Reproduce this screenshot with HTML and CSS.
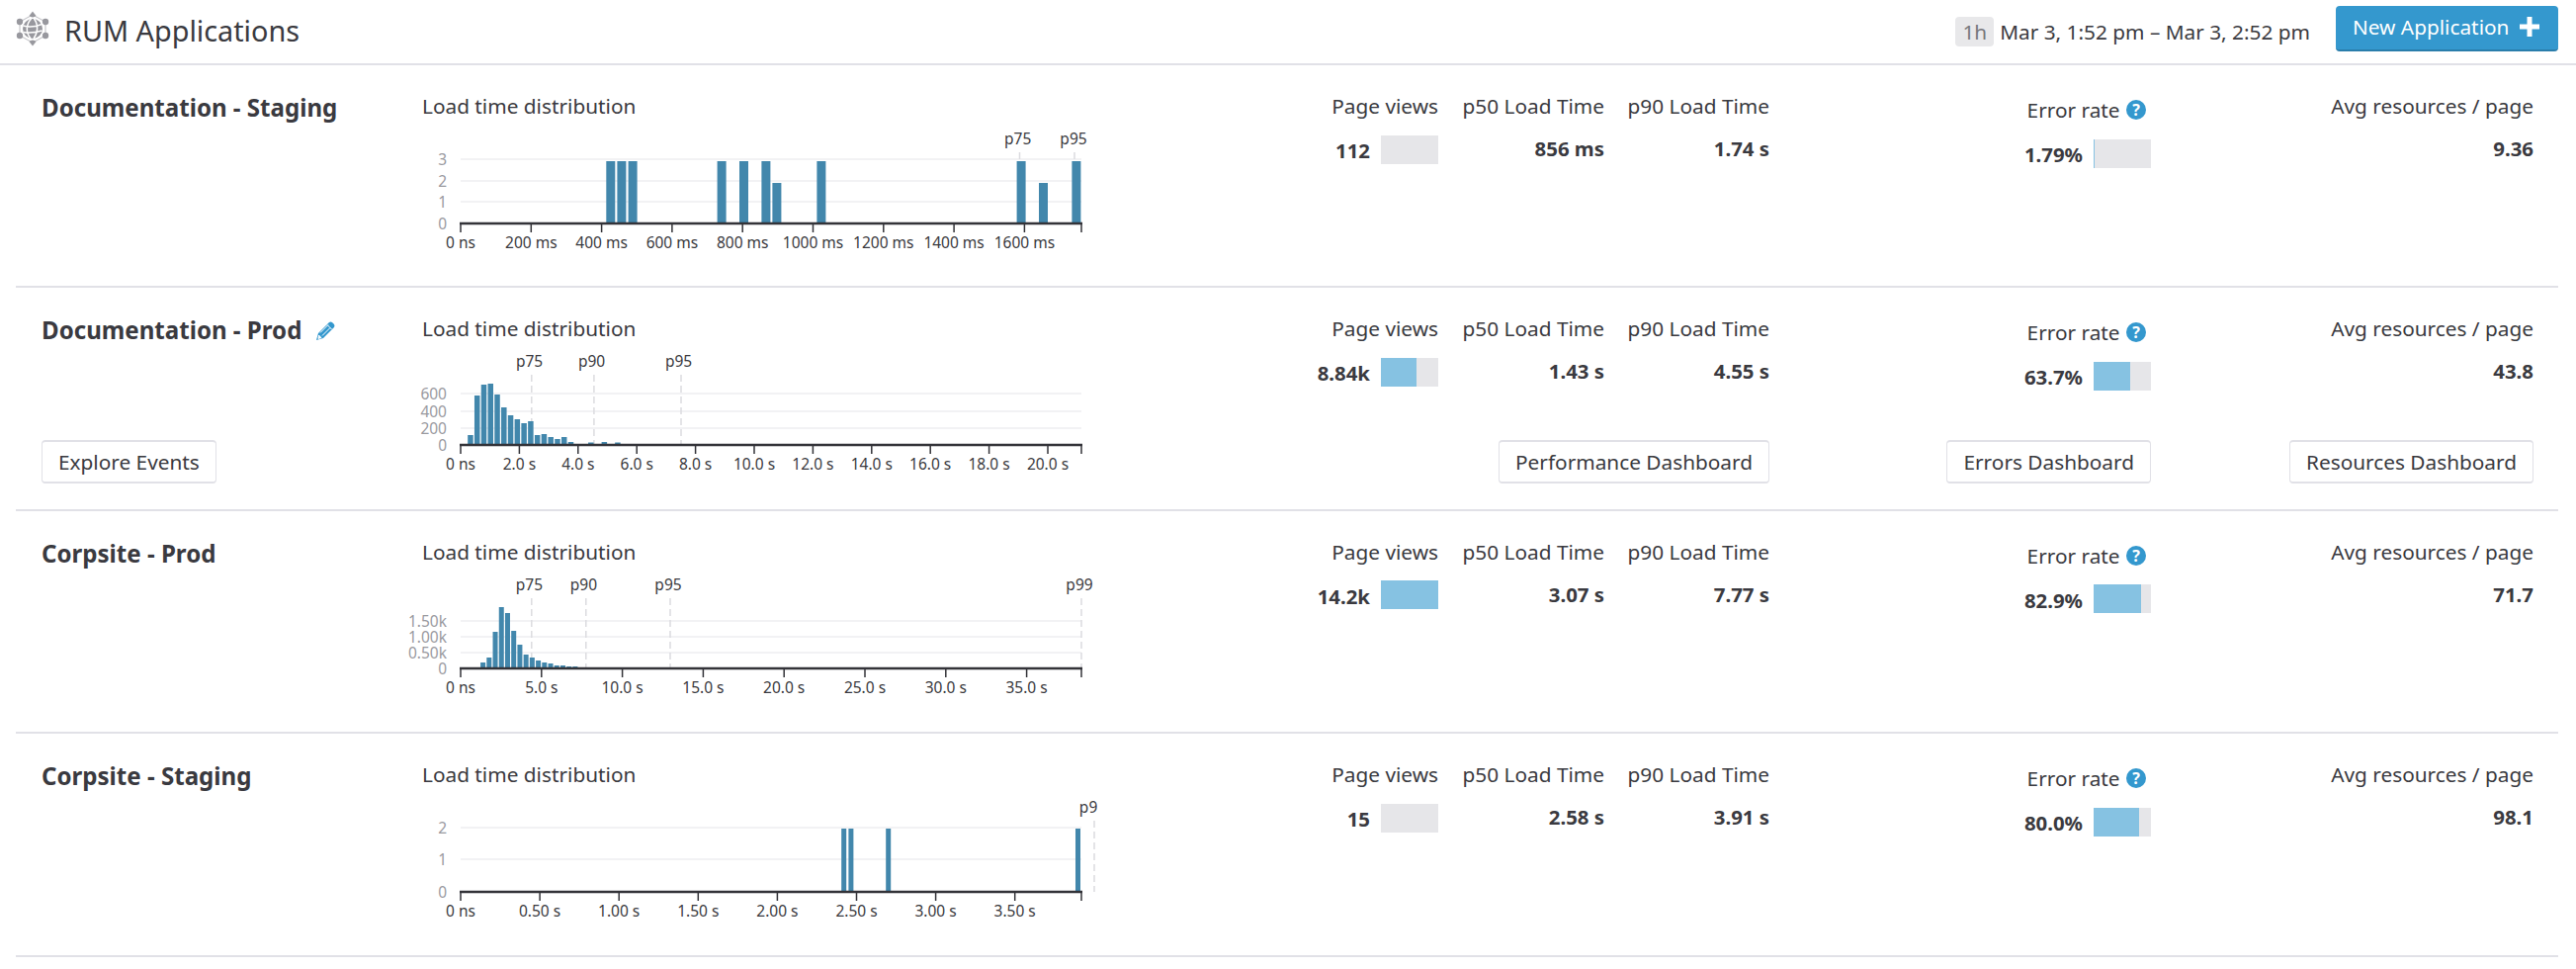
FILE: index.html
```html
<!DOCTYPE html>
<html lang="en">

<head>
    <meta charset="UTF-8">
    <title>RUM Applications</title>
    <link rel="stylesheet" href="styles.css">
</head>

<body>

    <header class="page-header">
        <svg class="globe" viewBox="0 0 34 36" width="34" height="36">
            <path class="globe-ring" d="M17 4 L30 11 L30 25 L17 32 L4 25 L4 11 Z" />
            <path class="globe-node" d="M17 .5 L20.500 5 L17 7 L13.500 5 Z" />
            <path class="globe-node" d="M17 35.500 L20.500 31 L17 29 L13.500 31 Z" />
            <circle class="globe-node" cx="4" cy="11" r="3.2" />
            <circle class="globe-node" cx="30" cy="11" r="3.2" />
            <circle class="globe-node" cx="4" cy="25" r="3.2" />
            <circle class="globe-node" cx="30" cy="25" r="3.2" />
            <circle class="globe-halo" cx="17" cy="18" r="11.5" />
            <circle class="globe-body" cx="17" cy="18" r="10" />
            <path class="globe-lines" d="M15.500 8 C10 14 10 22 15 28 M18.500 8 C23 14 22.500 22 18 28 M7.500 15 C13 17 20 16 26.500 13.500 M7.500 21.500 C13 22.500 20 22 26.500 20" />
        </svg>
        <h1 class="page-title">RUM Applications</h1>
        <div class="time-range">
            <span class="time-chip">1h</span>
            <span class="time-text">Mar 3, 1:52 pm – Mar 3, 2:52 pm</span>
        </div>
        <button class="btn-primary">New Application
            <svg class="plus" viewBox="0 0 20 20" width="20" height="20"><path d="M7.5 0h5v7.5H20v5h-7.5V20h-5v-7.5H0v-5h7.5z" /></svg>
        </button>
    </header>

    <section class="app-row">
        <div class="col-name"><h2 class="app-name">Documentation - Staging</h2></div>
        <div class="col-chart">
            <div class="col-label">Load time distribution</div>
            <svg class="chart" id="chart-docs-staging" viewBox="400 60 710 140" width="710" height="140"></svg>
        </div>
        <div class="col-metric col-views">
            <div class="col-label">Page views</div>
            <div class="metric-value"><span class="value-num">112</span><span class="meter"></span></div>
        </div>
        <div class="col-metric col-time">
            <div class="col-label">p50 Load Time</div>
            <div class="metric-value">856 ms</div>
        </div>
        <div class="col-metric col-time">
            <div class="col-label">p90 Load Time</div>
            <div class="metric-value">1.74 s</div>
        </div>
        <div class="col-metric col-error">
            <div class="col-label">Error rate <span class="help">?</span></div>
            <div class="metric-value"><span class="value-num">1.79%</span><span class="meter"><span class="meter-fill" style="width: 1.79%"></span></span></div>
        </div>
        <div class="col-metric col-avg">
            <div class="col-label">Avg resources / page</div>
            <div class="metric-value">9.36</div>
        </div>
    </section>

    <section class="app-row">
        <div class="col-name">
            <h2 class="app-name">Documentation - Prod
                <svg class="pencil" viewBox="0 0 20 21" width="20" height="21">
                    <path class="pencil-body" d="M1 20 L3 13 L14 2 Q15.500 .8 17 2 L19 4 Q20 5.500 19 7 L8 18 Z" />
                    <path class="pencil-cut" d="M12 4.500 L16.500 9 M3.500 15 L6 17.500 L3 18.500 Z M5 12.500 L13 4.500 M7 15.500 L15 7.500" />
                </svg>
            </h2>
            <button class="btn">Explore Events</button>
        </div>
        <div class="col-chart">
            <div class="col-label">Load time distribution</div>
            <svg class="chart" id="chart-docs-prod" viewBox="400 60 710 140" width="710" height="140"></svg>
        </div>
        <div class="col-metric col-views">
            <div class="col-label">Page views</div>
            <div class="metric-value"><span class="value-num">8.84k</span><span class="meter"><span class="meter-fill" style="width: 62%"></span></span></div>
        </div>
        <div class="col-metric col-time">
            <div class="col-label">p50 Load Time</div>
            <div class="metric-value">1.43 s</div>
        </div>
        <div class="col-metric col-time">
            <div class="col-label">p90 Load Time</div>
            <div class="metric-value">4.55 s</div>
            <button class="btn">Performance Dashboard</button>
        </div>
        <div class="col-metric col-error">
            <div class="col-label">Error rate <span class="help">?</span></div>
            <div class="metric-value"><span class="value-num">63.7%</span><span class="meter"><span class="meter-fill" style="width: 63.7%"></span></span></div>
            <button class="btn">Errors Dashboard</button>
        </div>
        <div class="col-metric col-avg">
            <div class="col-label">Avg resources / page</div>
            <div class="metric-value">43.8</div>
            <button class="btn">Resources Dashboard</button>
        </div>
    </section>

    <section class="app-row">
        <div class="col-name"><h2 class="app-name">Corpsite - Prod</h2></div>
        <div class="col-chart">
            <div class="col-label">Load time distribution</div>
            <svg class="chart" id="chart-corp-prod" viewBox="400 60 710 140" width="710" height="140"></svg>
        </div>
        <div class="col-metric col-views">
            <div class="col-label">Page views</div>
            <div class="metric-value"><span class="value-num">14.2k</span><span class="meter"><span class="meter-fill" style="width: 100%"></span></span></div>
        </div>
        <div class="col-metric col-time">
            <div class="col-label">p50 Load Time</div>
            <div class="metric-value">3.07 s</div>
        </div>
        <div class="col-metric col-time">
            <div class="col-label">p90 Load Time</div>
            <div class="metric-value">7.77 s</div>
        </div>
        <div class="col-metric col-error">
            <div class="col-label">Error rate <span class="help">?</span></div>
            <div class="metric-value"><span class="value-num">82.9%</span><span class="meter"><span class="meter-fill" style="width: 82.9%"></span></span></div>
        </div>
        <div class="col-metric col-avg">
            <div class="col-label">Avg resources / page</div>
            <div class="metric-value">71.7</div>
        </div>
    </section>

    <section class="app-row">
        <div class="col-name"><h2 class="app-name">Corpsite - Staging</h2></div>
        <div class="col-chart">
            <div class="col-label">Load time distribution</div>
            <svg class="chart" id="chart-corp-staging" viewBox="400 60 710 140" width="710" height="140"></svg>
        </div>
        <div class="col-metric col-views">
            <div class="col-label">Page views</div>
            <div class="metric-value"><span class="value-num">15</span><span class="meter"></span></div>
        </div>
        <div class="col-metric col-time">
            <div class="col-label">p50 Load Time</div>
            <div class="metric-value">2.58 s</div>
        </div>
        <div class="col-metric col-time">
            <div class="col-label">p90 Load Time</div>
            <div class="metric-value">3.91 s</div>
        </div>
        <div class="col-metric col-error">
            <div class="col-label">Error rate <span class="help">?</span></div>
            <div class="metric-value"><span class="value-num">80.0%</span><span class="meter"><span class="meter-fill" style="width: 80%"></span></span></div>
        </div>
        <div class="col-metric col-avg">
            <div class="col-label">Avg resources / page</div>
            <div class="metric-value">98.1</div>
        </div>
    </section>

    <script src="charts.js"></script>

</body>

</html>
```

FILE: styles.css
```css
body {
    margin: 0;
    font-family: "Noto Sans", sans-serif;
    font-size: 20.8px;
    color: #3a3a40;
    background: #fff;
}

.page-header {
    display: flex;
    align-items: center;
    height: 64px;
    padding: 0 18px 0 16px;
    border-bottom: 2px solid #e1e1e7;
}

.globe {
    margin-right: 15px;
    margin-top: -6px;
    flex: none;
}

.globe-ring {
    fill: none;
    stroke: #c8c8cc;
    stroke-width: 1.2;
}

.globe-halo {
    fill: #fff;
}

.globe-node,
.globe-body {
    fill: #98989e;
}

.globe-lines {
    fill: none;
    stroke: #fff;
    stroke-width: 1.5;
}

.page-title {
    margin: -3px 0 0;
    font-size: 28.8px;
    font-weight: 400;
}

.time-range {
    display: flex;
    align-items: center;
    margin-left: auto;
    margin-right: 26px;
}

.time-chip {
    padding: 0 7px;
    height: 30px;
    line-height: 30px;
    margin-right: 6px;
    background: #e8e8ea;
    border-radius: 4px;
    color: #77777c;
}

.btn-primary {
    display: flex;
    align-items: center;
    gap: 11px;
    flex: none;
    height: 46px;
    width: 225px;
    padding: 0 0 2px 17px;
    margin-top: -6px;
    font: inherit;
    color: #fff;
    background: #3498ce;
    border: 0;
    border-bottom: 2px solid #2a7dab;
    border-radius: 4px;
}

.plus {
    fill: #fff;
}

.app-row {
    display: grid;
    grid-template-columns: 386px 682px 345px 168px 167px 386px 387px;
    grid-template-rows: minmax(0, 1fr);
    box-sizing: border-box;
    height: 225.4px;
    margin: 0 18px 0 16px;
    padding: 0 25px 25.4px 26px;
    border-bottom: 2px solid #e1e1e7;
}

.col-name,
.col-chart,
.col-metric {
    display: flex;
    flex-direction: column;
    padding-top: 27px;
}

.col-name {
    align-items: flex-start;
    padding-top: 26px;
}

.col-chart .col-label {
    margin-left: -1px;
}

.col-metric {
    align-items: flex-end;
    white-space: nowrap;
}

.col-error {
    padding-top: 31px;
}

.col-label {
    line-height: 28px;
}

.col-error .col-label {
    padding-right: 5px;
}

.app-name {
    display: flex;
    align-items: center;
    gap: 14px;
    margin: 0;
    font-size: 24.1px;
    line-height: 34px;
    font-weight: 700;
}

.chart {
    display: block;
    flex: none;
    margin-top: 5px;
    margin-left: -28px;
}

.metric-value {
    display: flex;
    align-items: center;
    gap: 11px;
    height: 30px;
    margin-top: 15px;
    font-size: 20.4px;
    font-weight: 700;
}

.col-time .metric-value,
.col-avg .metric-value {
    margin-top: 14px;
    margin-bottom: 1px;
}

.value-num {
    position: relative;
    top: 1px;
}

.meter {
    display: block;
    width: 58px;
    height: 29px;
    background: #e6e6e9;
}

.meter-fill {
    display: block;
    height: 100%;
    background: #86c2e2;
}

.help {
    display: inline-block;
    width: 20px;
    height: 20px;
    margin-left: 1px;
    line-height: 20px;
    font-size: 16px;
    font-weight: 700;
    text-align: center;
    color: #fff;
    background: #3498ce;
    border-radius: 50%;
    vertical-align: 2px;
}

.pencil-body {
    fill: #3498ce;
}

.pencil-cut {
    fill: #fff;
    stroke: #fff;
    stroke-width: 1;
}

.btn {
    height: 44px;
    margin-top: auto;
    padding: 0 16px;
    font: inherit;
    color: #3a3a40;
    white-space: nowrap;
    background: #fff;
    border: 1px solid #e1e1e7;
    border-top-width: 2px;
    border-bottom-width: 2px;
    border-radius: 4px;
}

.grid-line {
    stroke: #eeeef0;
    stroke-width: 1.5;
}

.marker-line {
    stroke: #dcdce0;
    stroke-width: 1.5;
    stroke-dasharray: 7 4;
}

.bar {
    fill: #4287ac;
}

.axis-line {
    stroke: #333338;
    stroke-width: 2.5;
}

.tick {
    stroke: #333338;
    stroke-width: 1.5;
}

.tick-label,
.marker-label {
    font-size: 15.5px;
    fill: #3a3a40;
    text-anchor: middle;
}

.y-label {
    font-size: 15.5px;
    fill: #9a9a9f;
    text-anchor: end;
}
```

FILE: charts.js
```js
// x values are page pixels, y values are pixels from the top of the row
const AXIS_LEFT = 466;
const AXIS_RIGHT = 1094;

const charts = {
    'chart-docs-staging': {
        base: 160,
        grid: [[95, '3'], [117, '2'], [138, '1'], [160, '0']],
        tickStep: 71.3,
        ticks: ['0 ns', '200 ms', '400 ms', '600 ms', '800 ms', '1000 ms', '1200 ms', '1400 ms', '1600 ms'],
        markers: [[1031.5, 'p75', 1029.7], [1087, 'p95', 1086]],
        barWidth: 9,
        bars: [[613.3, 63], [624.4, 63], [635.6, 63], [725.6, 63], [748, 63], [770.4, 63], [781.4, 41],
            [826.4, 63], [1028.6, 63], [1051, 41], [1084.4, 63]]
    },
    'chart-docs-prod': {
        base: 159,
        grid: [[107, '600'], [125, '400'], [142, '200'], [159, '0']],
        tickStep: 59.4,
        ticks: ['0 ns', '2.0 s', '4.0 s', '6.0 s', '8.0 s', '10.0 s', '12.0 s', '14.0 s', '16.0 s', '18.0 s', '20.0 s'],
        markers: [[537.8, 'p75', 535.6], [600.9, 'p90', 598.6], [689, 'p95', 686.6]],
        barWidth: 5.5,
        bars: [10, 50, 61, 62, 51, 38, 30, 26, 22, 24, 10, 11, 8, 6, 8, 3, 0, 0, 2.5, 0, 3, 0, 2.5]
            .map((h, i) => [473.2 + 6.77 * i, h])
    },
    'chart-corp-prod': {
        base: 159,
        grid: [[111, '1.50k'], [127, '1.00k'], [143, '0.50k'], [159, '0']],
        tickStep: 81.8,
        ticks: ['0 ns', '5.0 s', '10.0 s', '15.0 s', '20.0 s', '25.0 s', '30.0 s', '35.0 s'],
        markers: [[537.8, 'p75', 535.4], [592.8, 'p90', 590.4], [678, 'p95', 676], [1094, 'p99', 1092]],
        barWidth: 5,
        bars: [6, 11, 37, 62, 56, 38, 24, 14, 11, 8, 6, 5, 3, 3, 2, 2]
            .map((h, i) => [486.1 + 6.22 * i, h])
    },
    'chart-corp-staging': {
        base: 160,
        grid: [[95, '2'], [127, '1'], [160, '0']],
        tickStep: 80.1,
        ticks: ['0 ns', '0.50 s', '1.00 s', '1.50 s', '2.00 s', '2.50 s', '3.00 s', '3.50 s'],
        markers: [[1107, 'p99', 1105.5]],
        barWidth: 5,
        bars: [[851.2, 64], [858.4, 64], [896.2, 64], [1088, 64]]
    }
};

function drawChart(id, chart) {
    let out = '';

    chart.grid.forEach(([y, label]) => {
        if (label !== '0') {
            out += `<line class="grid-line" x1="${AXIS_LEFT}" x2="${AXIS_RIGHT}" y1="${y}" y2="${y}"></line>`;
        }
        out += `<text class="y-label" x="452" y="${y + 6}">${label}</text>`;
    });

    chart.markers.forEach(([x, label, labelX]) => {
        out += `<line class="marker-line" x1="${x}" x2="${x}" y1="88" y2="${chart.base}"></line>`;
        out += `<text class="marker-label" x="${labelX}" y="80">${label}</text>`;
    });

    chart.bars.forEach(([x, h]) => {
        if (h > 0) {
            out += `<rect class="bar" x="${x}" y="${chart.base - h}" width="${chart.barWidth}" height="${h}"></rect>`;
        }
    });

    out += `<line class="axis-line" x1="${AXIS_LEFT - 1}" x2="${AXIS_RIGHT + 1}" y1="${chart.base}" y2="${chart.base}"></line>`;

    chart.ticks.forEach((label, i) => {
        const x = AXIS_LEFT + chart.tickStep * i;
        out += `<line class="tick" x1="${x}" x2="${x}" y1="${chart.base}" y2="${chart.base + 9}"></line>`;
        out += `<text class="tick-label" x="${x}" y="${chart.base + 25}">${label}</text>`;
    });
    out += `<line class="tick" x1="${AXIS_RIGHT}" x2="${AXIS_RIGHT}" y1="${chart.base}" y2="${chart.base + 9}"></line>`;

    document.getElementById(id).innerHTML = out;
}

Object.keys(charts).forEach((id) => drawChart(id, charts[id]));
```
